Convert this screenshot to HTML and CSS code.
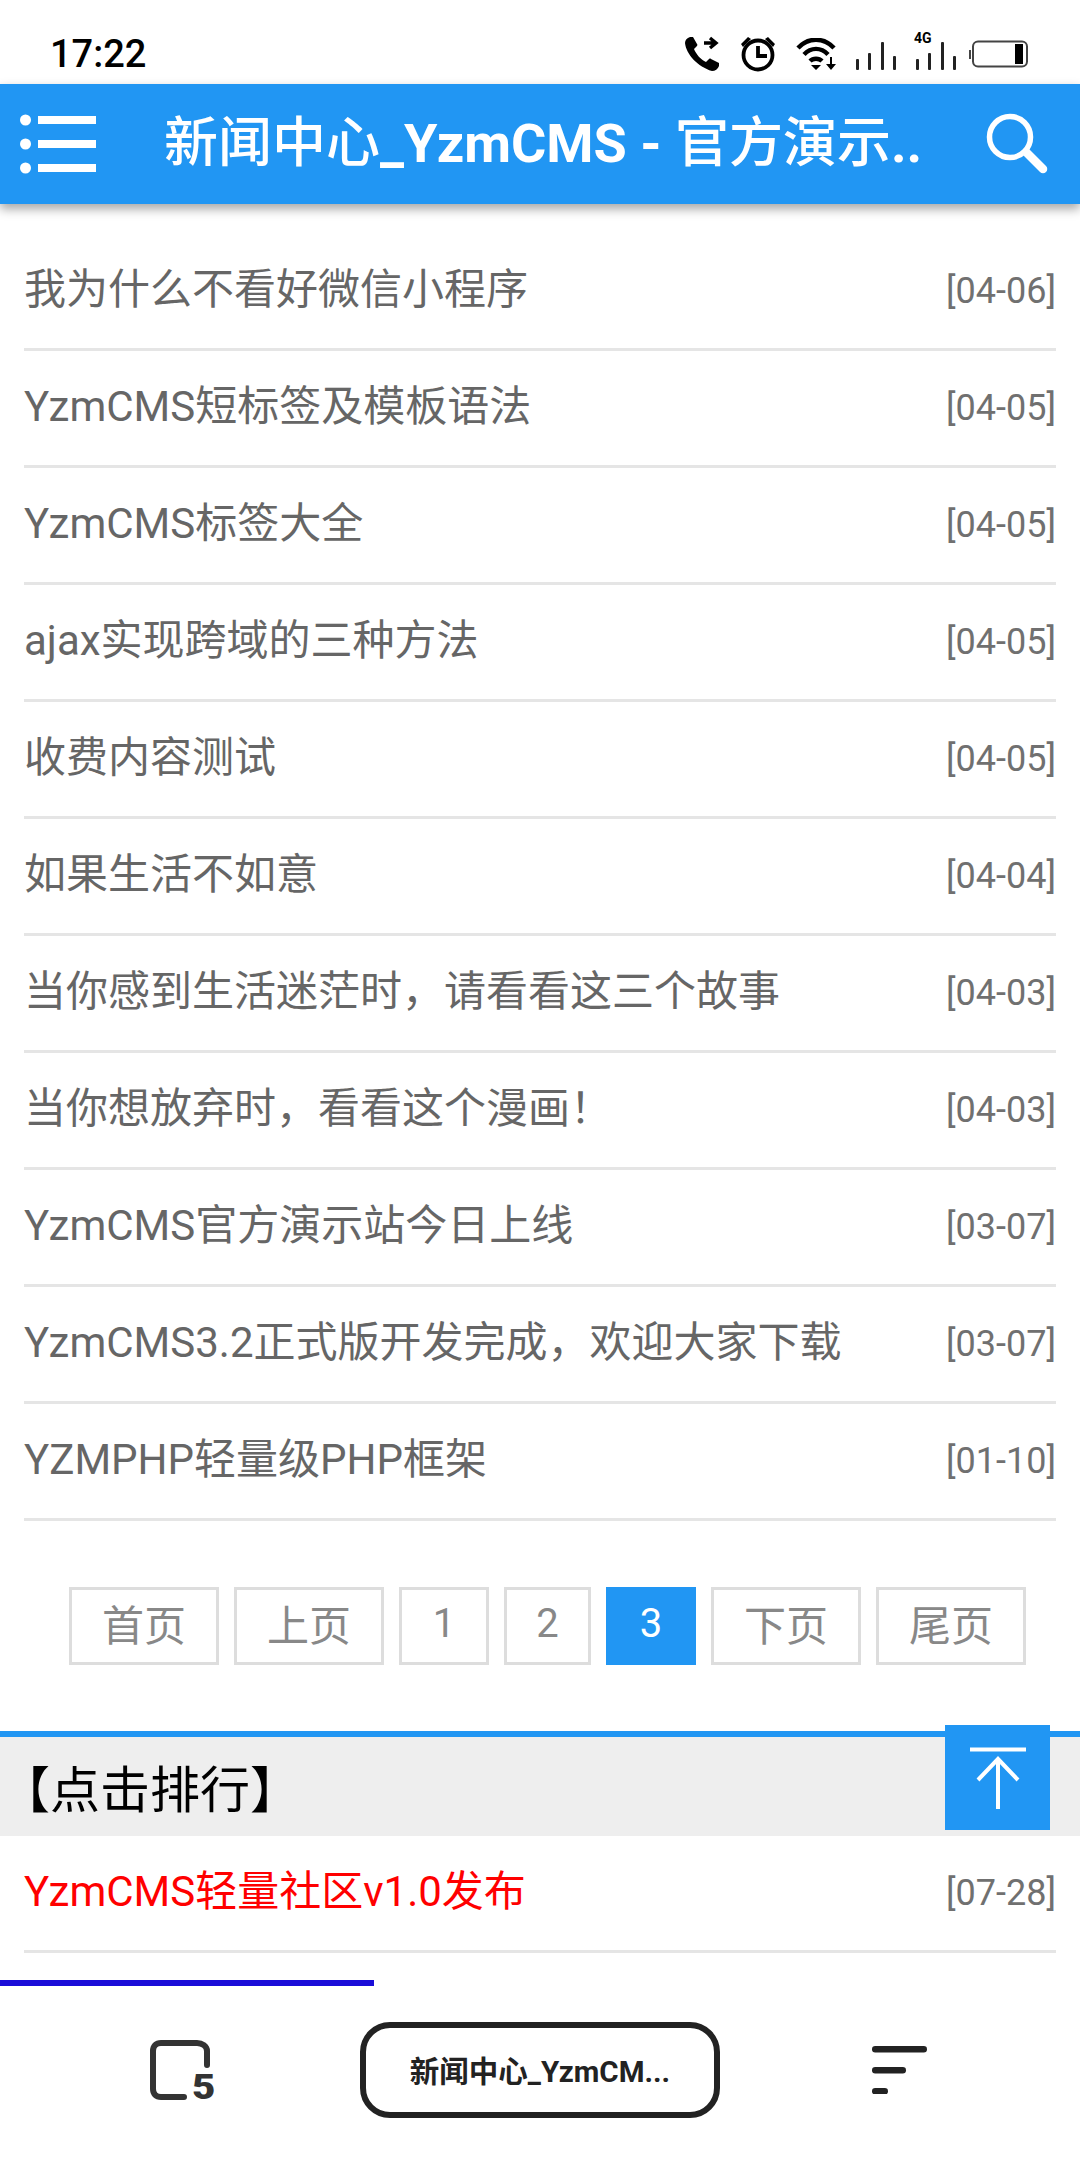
FILE: index.html
```html
<!DOCTYPE html>
<html lang="zh-CN">
<head>
<meta charset="utf-8">
<title>新闻中心_YzmCMS - 官方演示站</title>
<link rel="stylesheet" href="styles.css">
</head>
<body>
<div class="phone">
  <div class="status">
    <span class="clock">17:22</span>
    <div class="status-icons">
      <svg class="ic-call" viewBox="0 0 36 36" width="36" height="36"><path d="M6 1 C3 2 1 4 1 7 C2 18 14 31 28 35 C31 35 34 33 35 30 L35 27 L27 23 C26 22 25 23 24 24 L22 26 C17 24 12 18 10 13 L12 11 C13 10 14 9 13 8 L9 1 Z" fill="#000"/><path d="M20 7 H30 M26 2 L32 7 L26 12" fill="none" stroke="#000" stroke-width="3.4"/></svg>
      <svg class="ic-alarm" viewBox="0 0 36 36" width="36" height="36"><circle cx="18" cy="19" r="14.500" fill="none" stroke="#000" stroke-width="3.800"/><path d="M18 10 V20 H27" fill="none" stroke="#000" stroke-width="3.800"/><path d="M1 8 L8 1 L11 3 L3 11 Z M35 8 L28 1 L25 3 L33 11 Z" fill="#000"/></svg>
      <svg class="ic-wifi" viewBox="0 0 40 32" width="40" height="32"><path d="M2 10 C12 -1 28 -1 38 10 M8 16.500 C15 9 25 9 32 16.500 M14 23 C17 20 23 20 26 23" fill="none" stroke="#000" stroke-width="4.400"/><path d="M15 27 H25 L20 32 Z M30 26 H40 L35 32 Z" fill="#000"/><rect x="34" y="19" width="2" height="8" fill="#000"/></svg>
      <svg class="ic-sig" viewBox="0 0 40 30" width="40" height="30"><g fill="#222"><rect x="0" y="19" width="3" height="11" rx="1"/><rect x="12" y="13" width="3" height="17" rx="1"/><rect x="25" y="2" width="3" height="28" rx="1"/><rect x="37" y="16" width="3" height="14" rx="1"/></g></svg>
      <div class="sig4g">
        <span class="g4">4G</span>
        <svg viewBox="0 0 40 30" width="40" height="30"><g fill="#222"><rect x="0" y="19" width="3" height="11" rx="1"/><rect x="12" y="13" width="3" height="17" rx="1"/><rect x="25" y="2" width="3" height="28" rx="1"/><rect x="37" y="16" width="3" height="14" rx="1"/></g></svg>
      </div>
      <svg class="ic-batt" viewBox="0 0 60 28" width="60" height="28"><rect x="0" y="10" width="2" height="9" fill="#444"/><rect x="4" y="1.500" width="54" height="25" rx="5" fill="#fff" stroke="#444" stroke-width="2"/><rect x="46" y="4" width="8" height="20" fill="#000"/></svg>
    </div>
  </div>

  <header class="topbar">
    <svg class="menu-ic" viewBox="0 0 76 60" width="76" height="60"><g fill="#fff"><circle cx="5.500" cy="6" r="5.500"/><circle cx="5.500" cy="30" r="5.500"/><circle cx="5.500" cy="54" r="5.500"/><rect x="18" y="2" width="58" height="8"/><rect x="18" y="26" width="58" height="8"/><rect x="18" y="50" width="58" height="8"/></g></svg>
    <h1 class="title"><span class="han">新闻中心</span>_YzmCMS - <span class="han">官方演示</span>..</h1>
    <svg class="search-ic" viewBox="0 0 62 62" width="62" height="62"><circle cx="24" cy="24" r="20.500" fill="none" stroke="#fff" stroke-width="5.500"/><path d="M41 40 L57 56" stroke="#fff" stroke-width="8.500" stroke-linecap="round"/></svg>
  </header>

  <ul class="news first">
    <li class="row"><a class="row-link">我为什么不看好微信小程序</a><span class="date">[04-06]</span></li>
    <li class="row"><a class="row-link">YzmCMS短标签及模板语法</a><span class="date">[04-05]</span></li>
    <li class="row"><a class="row-link">YzmCMS标签大全</a><span class="date">[04-05]</span></li>
    <li class="row"><a class="row-link">ajax实现跨域的三种方法</a><span class="date">[04-05]</span></li>
    <li class="row"><a class="row-link">收费内容测试</a><span class="date">[04-05]</span></li>
    <li class="row"><a class="row-link">如果生活不如意</a><span class="date">[04-04]</span></li>
    <li class="row"><a class="row-link">当你感到生活迷茫时，请看看这三个故事</a><span class="date">[04-03]</span></li>
    <li class="row"><a class="row-link">当你想放弃时，看看这个漫画！</a><span class="date">[04-03]</span></li>
    <li class="row"><a class="row-link">YzmCMS官方演示站今日上线</a><span class="date">[03-07]</span></li>
    <li class="row"><a class="row-link">YzmCMS3.2正式版开发完成，欢迎大家下载</a><span class="date">[03-07]</span></li>
    <li class="row"><a class="row-link">YZMPHP轻量级PHP框架</a><span class="date">[01-10]</span></li>
  </ul>

  <nav class="pager">
    <a class="pg wide">首页</a>
    <a class="pg wide">上页</a>
    <a class="pg num">1</a>
    <a class="pg num slim">2</a>
    <a class="pg num on">3</a>
    <a class="pg wide">下页</a>
    <a class="pg wide">尾页</a>
  </nav>

  <section class="rank">
    <h2 class="rank-head">【点击排行】</h2>
    <ul class="news">
      <li class="row hot"><a class="row-link">YzmCMS轻量社区v1.0发布</a><span class="date">[07-28]</span></li>
    </ul>
  </section>

  <a class="totop">
    <svg viewBox="0 0 56 62" width="56" height="62"><path d="M0 2.500 H56 M28 11 V62 M8 33 L28 12 L48 33" fill="none" stroke="#fff" stroke-width="4" /></svg>
  </a>

  <footer class="browser">
    <div class="progress"></div>
    <div class="browser-bar">
      <div class="tabs">
        <svg viewBox="0 0 64 60" width="64" height="60"><path d="M34 57 H11 C6 57 3 54 3 49 V11 C3 6 6 3 11 3 H47 C52 3 57 6 57 11 V25" fill="none" stroke="#333" stroke-width="6" stroke-linecap="round"/></svg>
        <span class="tabs-n">5</span>
      </div>
      <div class="url-pill">新闻中心_YzmCM...</div>
      <svg class="more-ic" viewBox="0 0 55 48" width="55" height="48"><g fill="#222"><rect x="0" y="0" width="55" height="6.500" rx="3.200"/><rect x="0" y="21" width="34" height="6.500" rx="3.200"/><rect x="0" y="42" width="16" height="6.500" rx="3.200"/></g></svg>
    </div>
  </footer>
</div>
</body>
</html>
```

FILE: styles.css
```css
* { box-sizing: border-box; }
html, body { margin: 0; padding: 0; background: #fff; }
body { font-family: Roboto, "Noto Sans CJK SC", sans-serif; }
ul { list-style: none; margin: 0; padding: 0; }
h1, h2 { margin: 0; font-weight: normal; }

.phone { position: relative; width: 1080px; height: 2160px; overflow: hidden; background: #fff; }

.status { height: 84px; display: flex; align-items: center; justify-content: space-between; padding: 24px 51px 0 50px; }
.clock { font-size: 38px; font-weight: 500; color: #000; }
.status-icons { display: flex; align-items: center; gap: 20px; }
.sig4g { position: relative; margin-right: -7px; }
.sig4g svg { display: block; }
.ic-sig, .sig4g { margin-top: 2px; }
.g4 { position: absolute; left: -2px; top: -9px; font-size: 14px; font-weight: 700; color: #000; line-height: 14px; }

.topbar { height: 120px; background: #2196f3; display: flex; align-items: center; padding: 0 32px 0 20px; box-shadow: 0 5px 10px rgba(0,0,0,.35); color: #fff; position: relative; }
.title { flex: 1; margin: 0 60px 12px 68px; font-size: 54px; font-weight: 700; min-width: 0; white-space: nowrap; }
.han { font-weight: 500; }

.news { padding: 0 24px; }
.first { padding-top: 30px; }
.row { height: 117px; display: flex; align-items: center; justify-content: space-between; border-bottom: 3px solid #e5e5e5; color: #666; font-size: 42px; }
.row-link { margin-bottom: 12px; }
.date { font-size: 36px; color: #707070; }
.hot .row-link { color: #f00; }

.pager { display: flex; justify-content: center; gap: 15px; margin-top: 66px; padding-left: 15px; }
.pg { height: 78px; border: 3px solid #ddd; color: #888; font-size: 42px; display: flex; align-items: center; justify-content: center; padding-bottom: 8px; }
.wide { width: 150px; }
.num { width: 90px; font-size: 40px; padding-bottom: 6px; }
.slim { width: 87px; }
.on { background: #2196f3; border-color: #2196f3; color: #fff; }

.rank { margin-top: 66px; border-top: 6px solid #2196f3; }
.rank-head { height: 99px; background: #eee; color: #000; font-size: 50px; display: flex; align-items: center; padding-bottom: 2px; }

.totop { position: absolute; left: 945px; top: 1725px; width: 105px; height: 105px; background: #2196f3; display: flex; align-items: center; justify-content: center; }

.browser { position: absolute; left: 0; right: 0; top: 1980px; height: 180px; background: #fff; }
.progress { width: 374px; height: 6px; background: #1a0dd8; }
.browser-bar { height: 174px; display: flex; align-items: center; justify-content: space-between; padding: 0 153px 6px 150px; }
.tabs { position: relative; width: 64px; height: 60px; }
.tabs svg { display: block; }
.tabs-n { position: absolute; left: 42px; top: 30px; font-weight: 900; font-size: 35px; line-height: 1; color: #333; transform: scaleX(1.15); transform-origin: left; }
.url-pill { width: 360px; height: 96px; margin-right: 6px; border: 6px solid #222; border-radius: 30px; display: flex; align-items: center; justify-content: center; font-size: 29.500px; font-weight: 700; color: #222; white-space: nowrap; padding-bottom: 3px; }
```
